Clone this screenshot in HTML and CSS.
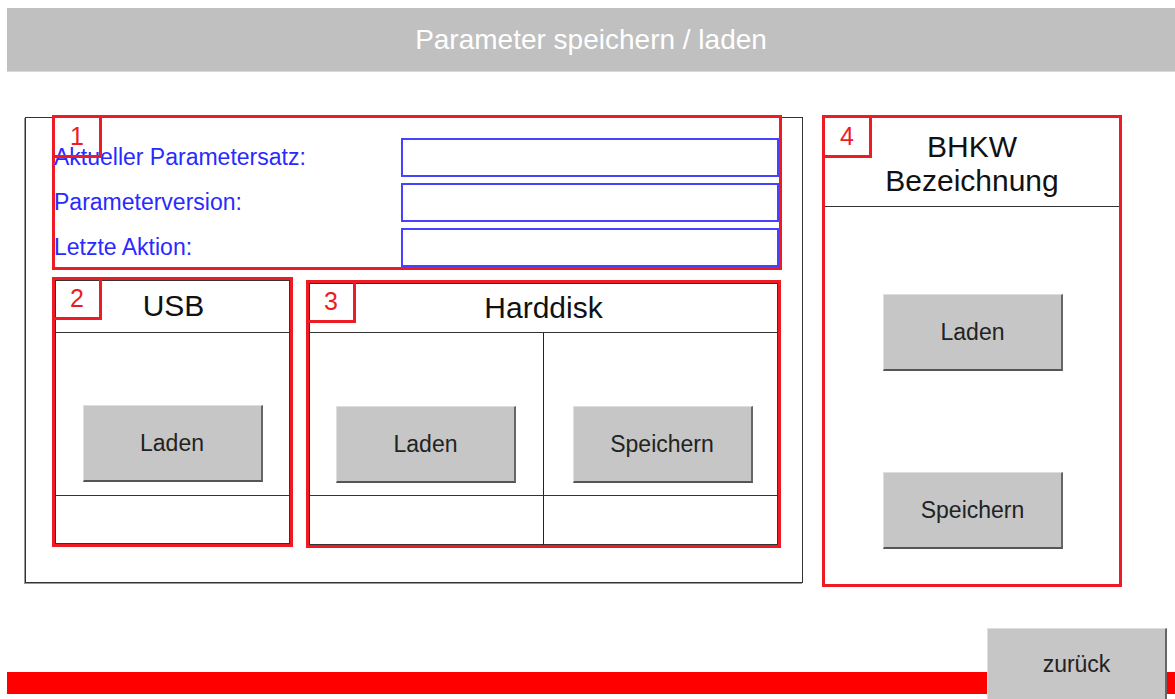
FILE: index.html
```html
<!DOCTYPE html>
<html lang="de">
<head>
  <meta charset="UTF-8" />
  <meta name="viewport" content="width=device-width, initial-scale=1.0">
  <title>Parameter speichern / laden</title>
  <link rel="stylesheet" href="styles.css">
</head>
<body>
  <header class="title-bar">Parameter speichern / laden</header>

  <main class="screen">
    <section class="panel">
      <div class="mark mark-info">
        <span class="mark-num">1</span>
        <div class="info-row">
          <label class="info-label">Aktueller Parametersatz:</label>
          <div class="info-field"></div>
        </div>
        <div class="info-row">
          <label class="info-label">Parameterversion:</label>
          <div class="info-field"></div>
        </div>
        <div class="info-row">
          <label class="info-label">Letzte Aktion:</label>
          <div class="info-field"></div>
        </div>
      </div>

      <div class="group-row">
        <div class="mark group group-usb">
          <span class="mark-num">2</span>
          <div class="group-head">USB</div>
          <div class="group-body">
            <div class="cell"><button class="hmi-btn">Laden</button></div>
          </div>
          <div class="group-foot">
            <div class="foot-cell"></div>
          </div>
        </div>

        <div class="mark group group-hdd">
          <span class="mark-num">3</span>
          <div class="group-head">Harddisk</div>
          <div class="group-body">
            <div class="cell cell-split"><button class="hmi-btn">Laden</button></div>
            <div class="cell"><button class="hmi-btn">Speichern</button></div>
          </div>
          <div class="group-foot">
            <div class="foot-cell cell-split"></div>
            <div class="foot-cell"></div>
          </div>
        </div>
      </div>
    </section>

    <section class="mark bhkw">
      <span class="mark-num">4</span>
      <div class="bhkw-head">BHKW<br>Bezeichnung</div>
      <div class="bhkw-body">
        <button class="hmi-btn">Laden</button>
        <button class="hmi-btn">Speichern</button>
      </div>
    </section>
  </main>

  <footer class="bottom">
    <div class="alarm-bar"></div>
    <button class="hmi-btn back-btn">zurück</button>
  </footer>
</body>
</html>
```

FILE: styles.css
```css
* { box-sizing: border-box; }
body { margin: 0; background: #fff; font-family: "Liberation Sans", Arial, sans-serif; color: #222; width: 1175px; height: 699px; overflow: hidden; }

.title-bar { margin: 8px 0 0 7px; height: 64px; line-height: 63px; background: #c0c0c0; border-bottom: 1px solid #d8d8d8; color: #fff; font-size: 28px; text-align: center; }

.screen { display: flex; align-items: flex-start; margin-top: 43px; height: 472px; }

.panel { width: 778px; height: 466px; margin: 2px 0 0 25px; border: 1px solid #333; box-shadow: -1px 1px 0 #999; }

/* red annotation frames */
.mark { position: relative; border: 3px solid #ed1c24; }
.mark-num { position: absolute; top: -3px; left: -3px; width: 50px; height: 43px; border: 3px solid #ed1c24; color: #ed1c24; font-size: 25px; line-height: 37px; text-align: center; }

.mark-info { width: 730px; height: 155px; margin: -3px 0 0 26px; padding-top: 20px; display: flex; flex-direction: column; gap: 6px; }
.info-row { display: flex; align-items: center; height: 39px; }
.info-label { width: 347px; margin-left: -1px; color: #2a2aff; font-size: 23px; }
.info-field { flex: 1; height: 39px; border: 2px solid #4444ff; }

.group-row { display: flex; align-items: flex-start; margin: 7px 0 0 26px; }
.group { display: flex; flex-direction: column; box-shadow: inset 0 0 0 1px #333; }
.group-usb { width: 241px; height: 270px; }
.group-hdd { width: 475px; height: 268px; margin: 3px 0 0 13px; }
.group-head { flex-shrink: 0; display: flex; align-items: center; justify-content: center; border-bottom: 1px solid #333; font-size: 30px; color: #111; }
.group-usb .group-head { height: 53px; padding-left: 2px; }
.group-hdd .group-head { height: 50px; }
.group-body { flex-shrink: 0; display: flex; height: 163px; border-bottom: 1px solid #333; }
.group-foot { display: flex; flex: 1; }
.cell { flex: 1; display: flex; justify-content: center; align-items: flex-start; padding-top: 72px; }
.foot-cell { flex: 1; }
.group-hdd .cell { padding-top: 73px; }
.group-hdd .cell-split { flex: 0 0 235px; border-right: 1px solid #222; }
.group-hdd .cell:last-child { padding-left: 3px; }

.bhkw { width: 300px; height: 472px; margin-left: 19px; }
.bhkw-head { height: 89px; border-bottom: 1px solid #333; padding-top: 12px; font-size: 30px; line-height: 34px; text-align: center; color: #111; }
.bhkw-body { display: flex; flex-direction: column; align-items: center; gap: 101px; padding: 87px 0 0 2px; }

.hmi-btn { width: 180px; height: 77px; padding: 0; background: #c6c6c6; border-top: 1px solid #dedede; border-left: 1px solid #dedede; border-right: 2px solid #666; border-bottom: 2px solid #555; font-family: "Liberation Sans", Arial, sans-serif; font-size: 23px; color: #222; }

.bottom { position: relative; display: flex; justify-content: flex-end; margin-top: 41px; height: 71px; padding-right: 8px; }
.alarm-bar { position: absolute; top: 44px; left: 7px; right: 0; height: 22px; background: #ff0000; }
.back-btn { position: relative; height: 72px; border-bottom: none; }
```
